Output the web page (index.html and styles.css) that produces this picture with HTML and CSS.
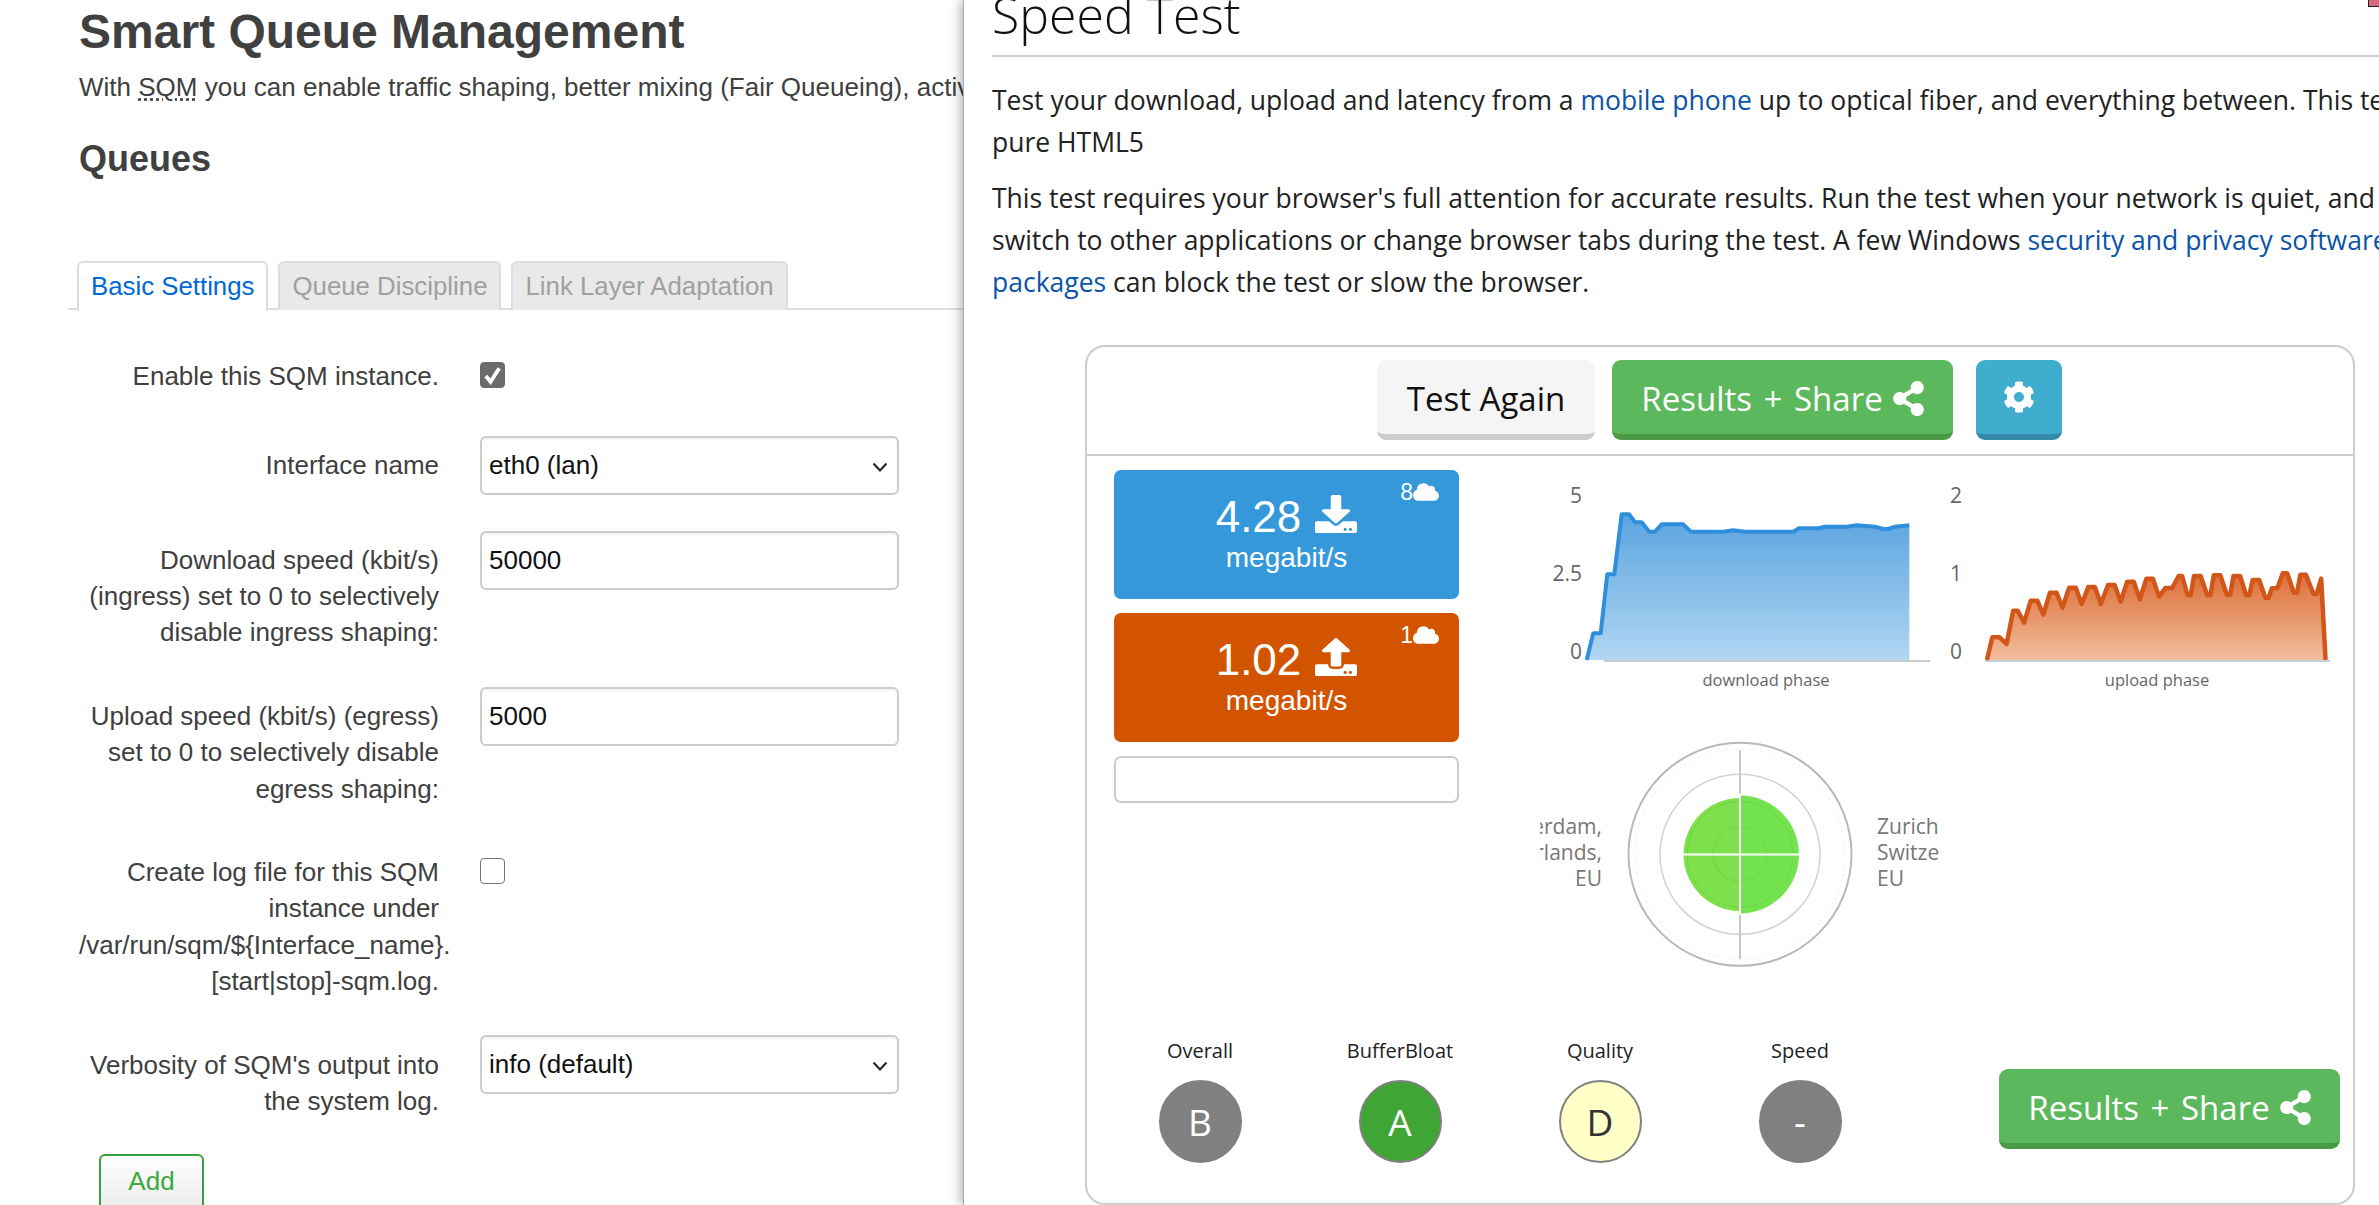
FILE: index.html
```html
<!DOCTYPE html>
<html lang="en">
<head>
<meta charset="utf-8">
<title>Smart Queue Management and Speed Test</title>
<link rel="stylesheet" href="styles.css">
</head>
<body>
<div class="page">
  <main class="sqm">
    <h1 class="sqm-title">Smart Queue Management</h1>
    <p class="sqm-intro">With <abbr class="dotted">SQM</abbr> you can enable traffic shaping, better mixing (Fair Queueing), active queue length management (AQM) and prioritisation on one network interface.</p>
    <h2 class="sqm-sub">Queues</h2>
    <ul class="tabs">
      <li class="tab tab-active">Basic Settings</li>
      <li class="tab">Queue Discipline</li>
      <li class="tab">Link Layer Adaptation</li>
    </ul>
    <form class="form">
      <div class="row row-check">
        <label class="label">Enable this SQM instance.</label>
        <span class="check check-on"><svg viewBox="0 0 24 24" class="check-mark"><path d="M5 13l5 6 9-14" fill="none" stroke="#fff" stroke-width="4"/></svg></span>
      </div>
      <div class="row">
        <label class="label">Interface name</label>
        <div class="field field-select">eth0 (lan)<svg class="chev" viewBox="0 0 16 10"><path d="M1.5 1.5L8 8.5l6.500-7" fill="none" stroke="#222" stroke-width="2"/></svg></div>
      </div>
      <div class="row">
        <label class="label">Download speed (kbit/s) (ingress) set to 0 to selectively disable ingress shaping:</label>
        <div class="field">50000</div>
      </div>
      <div class="row">
        <label class="label">Upload speed (kbit/s) (egress) set to 0 to selectively disable egress shaping:</label>
        <div class="field">5000</div>
      </div>
      <div class="row row-check">
        <label class="label">Create log file for this SQM instance under /var/run/sqm/${Interface_name}.[start|stop]-sqm.log.</label>
        <span class="check"></span>
      </div>
      <div class="row">
        <label class="label">Verbosity of SQM's output into the system log.</label>
        <div class="field field-select">info (default)<svg class="chev" viewBox="0 0 16 10"><path d="M1.5 1.5L8 8.5l6.500-7" fill="none" stroke="#222" stroke-width="2"/></svg></div>
      </div>
    </form>
    <button class="add" type="button">Add</button>
  </main>

  <aside class="speed">
    <span class="corner"></span>
    <h1 class="speed-title">Speed Test</h1>
    <p class="speed-p">Test your download, upload and latency from a <a href="#">mobile phone</a> up to optical fiber, and everything between. This test uses<br>pure HTML5</p>
    <p class="speed-p">This test requires your browser's full attention for accurate results. Run the test when your network is quiet, and do not<br>switch to other applications or change browser tabs during the test. A few Windows <a href="#">security and privacy software</a><br><a href="#">packages</a> can block the test or slow the browser.</p>

    <section class="box">
      <div class="box-head">
        <button class="btn btn-light" type="button">Test Again</button>
        <button class="btn btn-green" type="button">Results + Share <svg class="share" viewBox="0 0 448 512"><path d="M352 320c-22.608 0-43.387 7.819-59.79 20.895l-102.486-64.054a96.551 96.551 0 0 0 0-41.683l102.486-64.054C308.613 184.181 329.392 192 352 192c53.019 0 96-42.981 96-96S405.019 0 352 0s-96 42.981-96 96c0 7.158.79 14.13 2.276 20.841L155.790 180.895C139.387 167.819 118.608 160 96 160c-53.019 0-96 42.981-96 96s42.981 96 96 96c22.608 0 43.387-7.819 59.790-20.895l102.486 64.054A96.301 96.301 0 0 0 256 416c0 53.019 42.981 96 96 96s96-42.981 96-96-42.981-96-96-96z"/></svg></button>
        <button class="btn btn-blue" type="button" aria-label="Settings"><svg class="gear" viewBox="0 0 512 512"><path d="M487.400 315.700l-42.600-24.600c4.300-23.200 4.300-47 0-70.200l42.600-24.600c4.900-2.800 7.100-8.600 5.500-14-11.100-35.600-30-67.800-54.700-94.600-3.800-4.100-10-5.100-14.800-2.300L380.800 110c-17.900-15.400-38.500-27.300-60.800-35.100V25.800c0-5.600-3.900-10.500-9.400-11.700-36.700-8.200-74.300-7.800-109.200 0-5.500 1.200-9.400 6.100-9.400 11.700V75c-22.200 7.900-42.800 19.800-60.800 35.100L88.700 85.500c-4.900-2.800-11-1.900-14.800 2.300-24.700 26.700-43.600 58.900-54.700 94.600-1.700 5.400.6 11.200 5.500 14L67.300 221c-4.300 23.200-4.300 47 0 70.200l-42.600 24.600c-4.900 2.800-7.100 8.600-5.500 14 11.100 35.600 30 67.800 54.700 94.600 3.800 4.100 10 5.100 14.800 2.300l42.600-24.600c17.900 15.400 38.500 27.300 60.800 35.100v49.200c0 5.600 3.900 10.500 9.400 11.700 36.700 8.200 74.300 7.800 109.200 0 5.500-1.200 9.400-6.100 9.400-11.700v-49.200c22.200-7.900 42.800-19.800 60.800-35.100l42.600 24.600c4.900 2.800 11 1.900 14.800-2.300 24.700-26.700 43.600-58.900 54.700-94.600 1.500-5.500-.7-11.300-5.600-14.100zM256 336c-44.100 0-80-35.900-80-80s35.900-80 80-80 80 35.900 80 80-35.900 80-80 80z"/></svg></button>
      </div>
      <div class="box-main">
        <div class="cards">
          <div class="card card-down">
            <div class="card-count">8<svg class="cloud" viewBox="0 0 640 512" preserveAspectRatio="none"><path d="M537.600 226.600c4.100-10.700 6.400-22.400 6.400-34.600 0-53-43-96-96-96-19.700 0-38.100 6-53.300 16.200C367 64.200 315.300 32 256 32c-88.400 0-160 71.600-160 160 0 2.700.1 5.400.2 8.100C40.200 219.800 0 273.200 0 336c0 79.500 64.500 144 144 144h368c70.700 0 128-57.300 128-128 0-61.900-44-113.600-102.400-125.400z"/></svg></div>
            <div class="card-value">4.28<svg class="card-icon" viewBox="0 0 512 512" preserveAspectRatio="none"><path d="M216 0h80c13.300 0 24 10.700 24 24v168h87.700c17.800 0 26.700 21.500 14.100 34.100L269.700 378.300c-7.500 7.500-19.800 7.500-27.300 0L90.100 226.100c-12.600-12.600-3.700-34.100 14.100-34.100H192V24c0-13.300 10.700-24 24-24zm296 376v112c0 13.300-10.700 24-24 24H24c-13.300 0-24-10.700-24-24V376c0-13.300 10.700-24 24-24h146.700l49 49c20.100 20.100 52.500 20.100 72.600 0l49-49H488c13.300 0 24 10.700 24 24zm-124 88c0-11-9-20-20-20s-20 9-20 20 9 20 20 20 20-9 20-20zm64 0c0-11-9-20-20-20s-20 9-20 20 9 20 20 20 20-9 20-20z"/></svg></div>
            <div class="card-unit">megabit/s</div>
          </div>
          <div class="card card-up">
            <div class="card-count">1<svg class="cloud" viewBox="0 0 640 512" preserveAspectRatio="none"><path d="M537.600 226.600c4.100-10.700 6.400-22.400 6.400-34.600 0-53-43-96-96-96-19.700 0-38.100 6-53.300 16.200C367 64.200 315.300 32 256 32c-88.400 0-160 71.600-160 160 0 2.700.1 5.400.2 8.100C40.200 219.800 0 273.200 0 336c0 79.500 64.500 144 144 144h368c70.700 0 128-57.300 128-128 0-61.900-44-113.600-102.400-125.400z"/></svg></div>
            <div class="card-value">1.02<svg class="card-icon" viewBox="0 0 512 512" preserveAspectRatio="none"><path d="M296 384h-80c-13.300 0-24-10.700-24-24V192h-87.700c-17.800 0-26.700-21.500-14.100-34.100L242.300 5.700c7.500-7.500 19.800-7.500 27.300 0l152.200 152.200c12.600 12.600 3.700 34.100-14.100 34.100H320v168c0 13.300-10.700 24-24 24zm216-8v112c0 13.300-10.700 24-24 24H24c-13.300 0-24-10.700-24-24V376c0-13.300 10.700-24 24-24h136v8c0 30.900 25.100 56 56 56h80c30.900 0 56-25.100 56-56v-8h136c13.300 0 24 10.700 24 24zm-124 88c0-11-9-20-20-20s-20 9-20 20 9 20 20 20 20-9 20-20zm64 0c0-11-9-20-20-20s-20 9-20 20 9 20 20 20 20-9 20-20z"/></svg></div>
            <div class="card-unit">megabit/s</div>
          </div>
          <div class="card-empty"></div>
        </div>
        <svg class="charts" viewBox="1500 470 840 566" aria-label="Speed charts and server radar">
          <defs>
            <linearGradient id="blueFill" x1="0" y1="0" x2="0" y2="1"><stop offset="0" stop-color="#5ba4e0"/><stop offset="1" stop-color="#b0d6f2"/></linearGradient>
            <linearGradient id="orangeFill" x1="0" y1="0" x2="0" y2="1"><stop offset="0" stop-color="#dc6f38"/><stop offset="1" stop-color="#f3bd9c"/></linearGradient>
            <clipPath id="clipLeft"><rect x="1540" y="800" width="70" height="100"/></clipPath>
            <clipPath id="clipRight"><rect x="1870" y="800" width="69" height="100"/></clipPath>
          </defs>

          <text class="axis" x="1582" y="503">5</text>
          <text class="axis" x="1582" y="581">2.5</text>
          <text class="axis" x="1582" y="659">0</text>
          <path class="baseline" d="M1604 661H1930"/>
          <path fill="url(#blueFill)" stroke="none" d="M1586.700 660L1593.300 633.300H1600.700L1607.300 574.300H1614.300L1621.700 514.300H1629L1635 522.300H1641.700L1649.300 531.700H1655L1661.700 524.300H1683.300L1690.700 531.700H1723.300L1733 530.300L1745 531.700H1793.300L1799 528.300H1818.300L1825 526.700H1846.700L1856.700 525.300L1875 526.700L1883.300 529H1888.300L1895 526.700L1909.300 525.300V660Z"/>
          <path class="line-blue" d="M1586.700 660L1593.300 633.300H1600.700L1607.300 574.300H1614.300L1621.700 514.300H1629L1635 522.300H1641.700L1649.300 531.700H1655L1661.700 524.300H1683.300L1690.700 531.700H1723.300L1733 530.300L1745 531.700H1793.300L1799 528.300H1818.300L1825 526.700H1846.700L1856.700 525.300L1875 526.700L1883.300 529H1888.300L1895 526.700L1909.300 525.300"/>
          <text class="phase" x="1766" y="686">download phase</text>

          <text class="axis" x="1962" y="503">2</text>
          <text class="axis" x="1962" y="581">1</text>
          <text class="axis" x="1962" y="659">0</text>
          <path class="baseline-up" d="M1985 661H2330"/>
          <g transform="translate(1520 340) scale(0.548 0.3333)">
            <path fill="url(#orangeFill)" stroke="none" d="M852 960L862 892H875L888 912L900 812H908L920 848L932 782H944L955 824L967 758H979L990 803L1002 743H1014L1025 792L1037 741H1049L1060 792L1073 735H1085L1096 785L1108 725H1120L1131 778L1143 716H1155L1166 770L1178 744H1190L1202 708H1208L1218 765H1224L1230 708H1242L1254 765H1260L1266 706H1278L1290 765H1296L1302 708H1314L1325 765H1331L1337 720H1349L1360 773H1366L1372 745H1382L1392 700H1400L1412 758H1418L1424 704H1434L1448 762H1454L1462 716L1470 960Z"/>
            <path class="line-orange" d="M852 960L862 892H875L888 912L900 812H908L920 848L932 782H944L955 824L967 758H979L990 803L1002 743H1014L1025 792L1037 741H1049L1060 792L1073 735H1085L1096 785L1108 725H1120L1131 778L1143 716H1155L1166 770L1178 744H1190L1202 708H1208L1218 765H1224L1230 708H1242L1254 765H1260L1266 706H1278L1290 765H1296L1302 708H1314L1325 765H1331L1337 720H1349L1360 773H1366L1372 745H1382L1392 700H1400L1412 758H1418L1424 704H1434L1448 762H1454L1462 716L1470 960"/>
          </g>
          <text class="phase" x="2157" y="686">upload phase</text>

          <circle class="ring-outer" cx="1740" cy="854.300" r="111.500"/>
          <circle class="ring-faint" cx="1740" cy="854.300" r="105"/>
          <circle class="ring-mid" cx="1740" cy="854.300" r="80"/>
          <path class="sweep-l" d="M1740 798A56.500 56.500 0 0 0 1740 911Z"/>
          <path class="sweep-r" d="M1740 795.500A59 59 0 0 1 1740 913.500Z"/>
          <circle class="ring-in" cx="1740" cy="854.300" r="27"/>
          <circle class="ring-in" cx="1740" cy="854.300" r="53"/>
          <path class="axis-v" d="M1740 750V794M1740 915V959"/>
          <path class="cross" d="M1740 794V915M1683 854.500H1800"/>

          <g clip-path="url(#clipLeft)">
            <text class="place place-r" x="1602" y="834">Amsterdam,</text>
            <text class="place place-r" x="1602" y="860">Netherlands,</text>
            <text class="place place-r" x="1602" y="886">EU</text>
          </g>
          <g clip-path="url(#clipRight)">
            <text class="place" x="1877" y="834">Zurich,</text>
            <text class="place" x="1877" y="860">Switzerland,</text>
            <text class="place" x="1877" y="886">EU</text>
          </g>
        </svg>
      </div>
      <div class="box-foot">
        <div class="grades">
          <div class="grade"><div class="grade-name">Overall</div><div class="grade-dot dot-grey">B</div></div>
          <div class="grade"><div class="grade-name">BufferBloat</div><div class="grade-dot dot-green">A</div></div>
          <div class="grade"><div class="grade-name">Quality</div><div class="grade-dot dot-yellow">D</div></div>
          <div class="grade"><div class="grade-name">Speed</div><div class="grade-dot dot-grey">-</div></div>
        </div>
        <button class="btn btn-green btn-foot" type="button">Results + Share <svg class="share" viewBox="0 0 448 512"><path d="M352 320c-22.608 0-43.387 7.819-59.79 20.895l-102.486-64.054a96.551 96.551 0 0 0 0-41.683l102.486-64.054C308.613 184.181 329.392 192 352 192c53.019 0 96-42.981 96-96S405.019 0 352 0s-96 42.981-96 96c0 7.158.79 14.13 2.276 20.841L155.790 180.895C139.387 167.819 118.608 160 96 160c-53.019 0-96 42.981-96 96s42.981 96 96 96c22.608 0 43.387-7.819 59.790-20.895l102.486 64.054A96.301 96.301 0 0 0 256 416c0 53.019 42.981 96 96 96s96-42.981 96-96-42.981-96-96-96z"/></svg></button>
      </div>
    </section>
  </aside>
</div>
</body>
</html>
```

FILE: styles.css
```css
* { box-sizing: border-box; }
html, body { margin: 0; height: 100%; overflow: hidden; background: #fff; }
.page { display: flex; width: 2379px; height: 1205px; overflow: hidden; }

/* left: OpenWrt page */
.sqm { width: 963px; flex: none; overflow: hidden; padding: 0 0 0 79px; font-family: "Liberation Sans", Arial, sans-serif; color: #404040; white-space: normal; }
.sqm-title { margin: 0; padding-top: 2px; font-size: 48px; line-height: 60px; font-weight: 700; color: #404040; white-space: nowrap; }
.sqm-intro { margin: 6.500px 0 0; font-size: 26px; line-height: 36px; white-space: nowrap; }
.dotted { text-decoration: underline dotted #404040; text-underline-offset: 3px; }
.sqm-sub { margin: 32.500px 0 0; font-size: 36px; line-height: 44px; font-weight: 700; color: #404040; }
.tabs { display: flex; gap: 10px; list-style: none; margin: 80px 0 0 -11px; padding: 0 0 0 9px; height: 49px; border-bottom: 2px solid #ddd; }
.tab { height: 49px; padding: 0 12px; font-size: 25.800px; line-height: 46px; color: #a0a0a0; background: #e9e9e9; border: 2px solid #ddd; border-bottom: 0; border-radius: 6px 6px 0 0; white-space: nowrap; }
.tab-active { background: #fff; color: #0069d6; height: 50px; position: relative; z-index: 1; }
.form { margin-top: 36.500px; }
.row { display: grid; grid-template-columns: 360px 419px; column-gap: 41px; align-items: start; margin-bottom: 36px; min-height: 53px; }
.label { display: block; padding-top: 11.500px; font-size: 26px; line-height: 36.200px; text-align: right; color: #404040; }
.field { position: relative; height: 59px; padding: 0 7px; font-size: 26px; line-height: 55px; color: #111; background: #fff; border: 2px solid #ccc; border-radius: 6px; box-shadow: inset 0 2px 2px rgba(0,0,0,.05); }
.field-select { background: #fff; }
.chev { position: absolute; right: 9px; top: 24px; width: 16px; height: 10px; }
.check { display: block; width: 25px; height: 26px; margin-top: 15px; border: 1.500px solid #767676; border-radius: 4px; background: #fff; }
.check-on { background: #6b6b6b; border-color: #6b6b6b; }
.check-mark { display: block; width: 100%; height: 100%; }
.add { display: block; width: 105px; height: 70px; margin-top: -1px; margin-left: 20px; padding: 0 0 16px; font: 26px/1 "Liberation Sans", Arial, sans-serif; color: #3aaa3a; background: linear-gradient(#fff, #e6e6e6); border: 2px solid #3aa03a; border-radius: 6px; }

/* right: speed test panel */
.speed { flex: 1; min-width: 0; position: relative; overflow: hidden; padding-left: 28px; background: #fff; border-left: 1px solid #aaa; box-shadow: -3px 0 10px rgba(0,0,0,.28); font-family: "Open Sans", "Noto Sans", sans-serif; color: #222; clip-path: inset(0 0 0 -20px); }
.corner { position: absolute; right: 0; top: 0; width: 11px; height: 7px; background: #d8667c; border-left: 1px solid #222; border-bottom: 1px solid #222; }
.speed-title { margin: -15px 0 0; height: 72px; font-size: 50px; line-height: 60px; font-weight: 300; border-bottom: 2px solid #ccc; color: #111; }
.speed-p { margin: 0 0 14px; font-size: 26.500px; line-height: 42px; white-space: nowrap; color: #222; }
.speed-title + .speed-p { margin-top: 21.500px; }
.speed-p a { color: #0b54a8; text-decoration: none; }
.box { width: 1270px; height: 860px; margin: 42.500px 0 0 93px; border: 2px solid #ccc; border-radius: 20px; }
.box-head { display: flex; justify-content: flex-start; gap: 17px; padding: 13px 0 0 290px; height: 109px; border-bottom: 2px solid #ccc; }
.btn { height: 80px; padding: 0 27px 0; font: 400 33px/1 "Open Sans", "Noto Sans", sans-serif; border: 0; border-bottom: 6px solid; border-radius: 9px; display: inline-flex; align-items: center; justify-content: center; white-space: nowrap; }
.btn-light { width: 218px; padding-top: 2px; background: #f5f5f5; color: #111; border-color: #ccc; }
.btn-green { width: 341px; padding-top: 2px; background: #5cb85c; color: #fff; border-color: #4a9a45; gap: 10px; word-spacing: 3px; }
.btn-blue { width: 86px; padding: 0; margin-left: 6px; background: #3fadcd; border-color: #358aa8; }
.share { width: 31px; height: 35px; fill: #fff; }
.gear { width: 32px; height: 32px; fill: #fff; }
.box-main { display: flex; padding: 14px 0 0 27px; }
.cards { width: 345px; flex: none; display: flex; flex-direction: column; gap: 14px; }
.card { position: relative; height: 129px; border-radius: 7px; color: #fff; font-family: "Liberation Sans", Arial, sans-serif; text-align: center; }
.card-down { background: #3498db; }
.card-up { background: #d35400; }
.card-value { display: flex; justify-content: center; align-items: flex-end; gap: 14px; height: 71.500px; font-size: 44px; line-height: 50px; }
.card-unit { font-size: 28px; line-height: 32px; }
.card-count { position: absolute; right: 20px; top: 9px; display: flex; align-items: center; font-size: 23px; line-height: 26px; }
.cloud { width: 26px; height: 20px; fill: #fff; }
.card-icon { width: 42px; height: 38px; fill: #fff; margin-bottom: 8.500px; }
.card-empty { height: 47px; border: 2px solid #ccc; border-radius: 7px; }
.charts { width: 840px; height: 566px; margin-left: 41px; flex: none; display: block; font-family: "Open Sans", "Noto Sans", sans-serif; }
.axis { font-size: 21px; fill: #666; text-anchor: end; }
.phase { font-size: 16.500px; fill: #666; text-anchor: middle; }
.baseline { stroke: #ccc; stroke-width: 2; fill: none; }
.baseline-up { stroke: #c4d2dc; stroke-width: 2; fill: none; }
.line-blue { fill: none; stroke: #2f8fdc; stroke-width: 4; stroke-linejoin: round; }
.line-orange { fill: none; stroke: #d2561a; stroke-width: 4.500; vector-effect: non-scaling-stroke; stroke-linejoin: round; }
.ring-outer { fill: #fff; stroke: #b8b8b8; stroke-width: 2; }
.ring-faint { fill: none; stroke: #eee; stroke-width: 1; stroke-dasharray: 2 3; }
.ring-mid { fill: none; stroke: #d4d0d4; stroke-width: 1.500; }
.ring-in { fill: none; stroke: #6fd63c; stroke-width: 1; }
.sweep-l { fill: #7ee04c; }
.sweep-r { fill: #72e34e; }
.axis-v { stroke: #c8c8c8; stroke-width: 2; fill: none; }
.cross { stroke: #fff; stroke-width: 2; fill: none; }
.place { font-size: 21px; fill: #777; }
.place-r { text-anchor: end; }
.box-foot { display: flex; align-items: flex-start; padding-left: 13px; }
.grades { display: grid; grid-template-columns: repeat(4, 200px); }
.grade { display: flex; flex-direction: column; align-items: center; }
.grade-name { font-size: 20px; line-height: 30px; color: #222; }
.grade-dot { width: 83px; height: 83px; margin-top: 14px; border-radius: 50%; display: flex; align-items: center; justify-content: center; font-size: 37px; border: 2px solid #808080; }
.dot-grey { background: #808080; color: #fff; }
.dot-green { background: #3fa535; color: #fff; }
.dot-yellow { background: #ffffc8; color: #333; }
.btn-foot { margin: 33px 0 0 99px; }
```
